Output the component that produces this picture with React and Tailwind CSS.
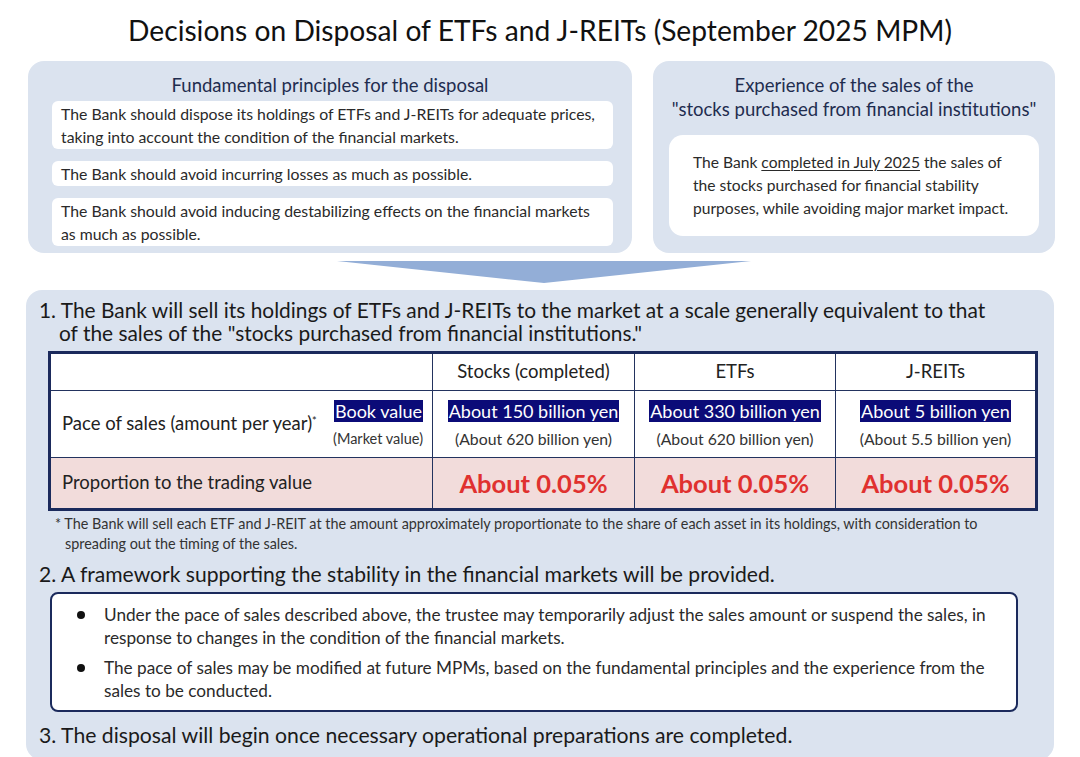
import React from 'react';

const font = { fontFamily: 'Lato, "Open Sans", "Liberation Sans", sans-serif' };

function Hl({ children }) {
  return <span className="bg-[#0b0b78] px-[1px] text-white">{children}</span>;
}

function ValueCell({ main, sub, last }) {
  return (
    <td className={last ? 'text-center align-middle' : 'border-r-[1.5px] border-[#23335f] text-center align-middle'}>
      <div className="text-[18px] leading-[24px] text-[#222]">
        <Hl>{main}</Hl>
      </div>
      <div className="mt-[6px] text-[15.8px] leading-[20px] text-[#333]">{sub}</div>
    </td>
  );
}

export default function App() {
  return (
    <div className="h-[757px] w-[1080px] overflow-hidden bg-white" style={font}>
      <h1 className="pt-[12px] text-center text-[28.2px] leading-[36px] text-[#111]">
        Decisions on Disposal of ETFs and J-REITs (September 2025 MPM)
      </h1>

      <div className="mt-[13px] flex gap-[21px] pl-[28px] pr-[25px]">
        <div className="flex h-[192px] w-[604px] flex-col rounded-[16px] bg-[#dbe3ef] px-[24px] pt-[12px]">
          <h2 className="text-center text-[18.5px] leading-[24px] text-[#1f2d4f]">
            Fundamental principles for the disposal
          </h2>
          <div className="mt-[4px] flex flex-col gap-[12px] whitespace-nowrap text-[15.8px] leading-[23px] text-[#2a2a2a]">
            <p className="mr-[-5px] rounded-[6px] bg-white px-[9px] py-[1px]">
              The Bank should dispose its holdings of ETFs and J-REITs for adequate prices,
              <br />
              taking into account the condition of the financial markets.
            </p>
            <p className="mr-[-5px] rounded-[6px] bg-white px-[9px] py-[1px]">
              The Bank should avoid incurring losses as much as possible.
            </p>
            <p className="mr-[-5px] rounded-[6px] bg-white px-[9px] py-[1px]">
              The Bank should avoid inducing destabilizing effects on the financial markets
              <br />
              as much as possible.
            </p>
          </div>
        </div>

        <div className="flex h-[192px] w-[402px] flex-col rounded-[16px] bg-[#dbe3ef] px-[16px] pt-[12px]">
          <h2 className="whitespace-nowrap text-center text-[18.5px] leading-[24px] text-[#1f2d4f]">
            Experience of the sales of the
            <br />
            "stocks purchased from financial institutions"
          </h2>
          <div className="mt-[14px] flex h-[101px] items-center rounded-[14px] bg-white pl-[24px] pr-[10px] text-[15.6px] leading-[23px] text-[#2a2a2a]">
            <p className="whitespace-nowrap">
              The Bank <span className="underline underline-offset-2">completed in July 2025</span> the sales of
              <br />
              the stocks purchased for financial stability
              <br />
              purposes, while avoiding major market impact.
            </p>
          </div>
        </div>
      </div>

      <div className="flex h-[37px] justify-center pl-[8px] pt-[8px]">
        <svg width="414" height="23" viewBox="0 0 414 23">
          <polygon points="0,0 414,0 207,22" fill="#93aed7" />
        </svg>
      </div>

      <div className="mx-[26px] h-[470px] rounded-[16px] bg-[#dbe3ef] px-[13px] pt-[8px]">
        <p className="whitespace-nowrap text-[20.9px] leading-[23px] text-[#1a1a1a]">
          1. The Bank will sell its holdings of ETFs and J-REITs to the market at a scale generally equivalent to that
          <br />
          <span className="pl-[20px]">of the sales of the "stocks purchased from financial institutions."</span>
        </p>

        <table className="ml-[9px] mt-[7px] w-[987px] table-fixed border-collapse border-[3px] border-[#1b2a5c] bg-white">
          <colgroup>
            <col className="w-[383px]" />
            <col className="w-[202px]" />
            <col className="w-[201px]" />
            <col className="w-[201px]" />
          </colgroup>
          <tbody>
            <tr className="h-[38px] border-b-[1.5px] border-[#23335f] text-center text-[18.5px] text-[#222]">
              <td className="border-r-[1.5px] border-[#23335f]"></td>
              <td className="border-r-[1.5px] border-[#23335f]">Stocks (completed)</td>
              <td className="border-r-[1.5px] border-[#23335f]">ETFs</td>
              <td>J-REITs</td>
            </tr>
            <tr className="h-[67px] border-b-[1.5px] border-[#23335f]">
              <td className="border-r-[1.5px] border-[#23335f] pl-[11px] pr-[9px]">
                <div className="flex items-center justify-between whitespace-nowrap">
                  <span className="text-[18.5px] text-[#222]">
                    Pace of sales (amount per year)<sup className="text-[11px]">*</sup>
                  </span>
                  <div className="text-right">
                    <div className="text-[18px] leading-[24px]">
                      <Hl>Book value</Hl>
                    </div>
                    <div className="mt-[6px] text-[14.5px] leading-[20px] text-[#333]">(Market value)</div>
                  </div>
                </div>
              </td>
              <ValueCell main="About 150 billion yen" sub="(About 620 billion yen)" />
              <ValueCell main="About 330 billion yen" sub="(About 620 billion yen)" />
              <ValueCell main="About 5 billion yen" sub="(About 5.5 billion yen)" last />
            </tr>
            <tr className="h-[52px] bg-[#f2dcdb]">
              <td className="border-r-[1.5px] border-[#23335f] pl-[11px] text-[18.5px] text-[#222]">
                Proportion to the trading value
              </td>
              <td className="border-r-[1.5px] border-[#23335f] text-center text-[25.5px] font-bold text-[#e0312f]">About 0.05%</td>
              <td className="border-r-[1.5px] border-[#23335f] text-center text-[25.5px] font-bold text-[#e0312f]">About 0.05%</td>
              <td className="text-center text-[25.5px] font-bold text-[#e0312f]">About 0.05%</td>
            </tr>
          </tbody>
        </table>

        <p className="ml-[16px] mt-[3px] whitespace-nowrap text-[14.4px] leading-[20px] text-[#333]">
          * The Bank will sell each ETF and J-REIT at the amount approximately proportionate to the share of each asset in its holdings, with consideration to
          <br />
          <span className="pl-[10px]">spreading out the timing of the sales.</span>
        </p>

        <p className="mt-[8px] whitespace-nowrap text-[21.1px] leading-[24px] text-[#1a1a1a]">
          2. A framework supporting the stability in the financial markets will be provided.
        </p>

        <div className="ml-[11px] mt-[6px] w-[968px] rounded-[8px] border-2 border-[#1b2a5c] bg-white pb-[8px] pl-[25px] pr-[16px] pt-[9px] text-[17.2px] leading-[23px] text-[#2a2a2a]">
          <div className="flex gap-[19px]">
            <span className="mt-[8px] h-[8px] w-[8px] shrink-0 rounded-full bg-[#111]"></span>
            <p className="whitespace-nowrap">
              Under the pace of sales described above, the trustee may temporarily adjust the sales amount or suspend the sales, in
              <br />
              response to changes in the condition of the financial markets.
            </p>
          </div>
          <div className="mt-[7px] flex gap-[19px]">
            <span className="mt-[8px] h-[8px] w-[8px] shrink-0 rounded-full bg-[#111]"></span>
            <p className="whitespace-nowrap">
              The pace of sales may be modified at future MPMs, based on the fundamental principles and the experience from the
              <br />
              sales to be conducted.
            </p>
          </div>
        </div>

        <p className="mt-[11px] whitespace-nowrap text-[21.2px] leading-[24px] text-[#1a1a1a]">
          3. The disposal will begin once necessary operational preparations are completed.
        </p>
      </div>
    </div>
  );
}
